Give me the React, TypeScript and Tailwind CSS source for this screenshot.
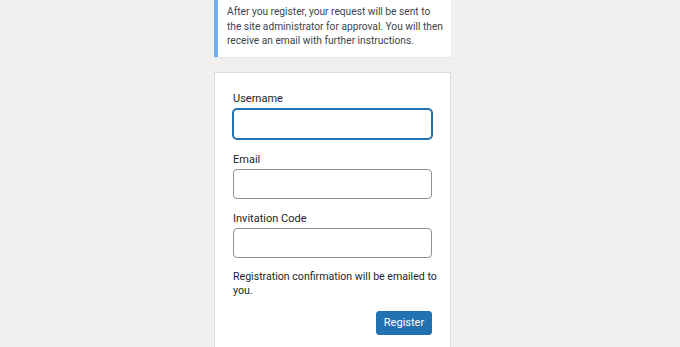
export default function App() {
  return (
    <div className="min-h-[347px] h-[347px] overflow-hidden bg-[#f0f0f1] font-['Roboto','Liberation_Sans',Arial,sans-serif] text-[#3c434a]">
      <div className="ml-[214px] w-[237px]">
        <div className="whitespace-nowrap border-l-4 border-[#72aee6] bg-white pl-[9px] pr-[4px] pt-[5px] pb-[8px] text-[10.2px] leading-[14.5px] shadow-[0_1px_1px_rgba(0,0,0,0.04)]">
          After you register, your request will be sent to
          <br />
          the site administrator for approval. You will then
          <br />
          receive an email with further instructions.
        </div>

        <form className="mt-[15px] h-[300px] border border-[#dcdcde] bg-white px-[18px] pt-[18px] text-[11px] leading-[15px] text-[#1d2327]">
          <label className="block">Username</label>
          <input
            type="text"
            className="mt-[3px] block h-[30px] w-full rounded-[4px] border border-[#2271b1] bg-white shadow-[0_0_0_1px_#2271b1] outline-none"
          />

          <label className="mt-[13px] block">Email</label>
          <input
            type="text"
            className="mt-[2px] block h-[30px] w-full rounded-[4px] border border-[#8c8f94] bg-white outline-none"
          />

          <label className="mt-[12px] block">Invitation Code</label>
          <input
            type="text"
            className="mt-[2px] block h-[30px] w-full rounded-[4px] border border-[#8c8f94] bg-white outline-none"
          />

          <p className="mt-[12px] whitespace-nowrap text-[10.6px] leading-[14px]">
            Registration confirmation will be emailed to
            <br />
            you.
          </p>

          <div className="mt-[13px] flex justify-end">
            <button
              type="button"
              className="h-[24px] w-[56px] rounded-[3px] border border-[#2271b1] bg-[#2271b1] text-[11px] text-white"
            >
              Register
            </button>
          </div>
        </form>
      </div>
    </div>
  );
}
